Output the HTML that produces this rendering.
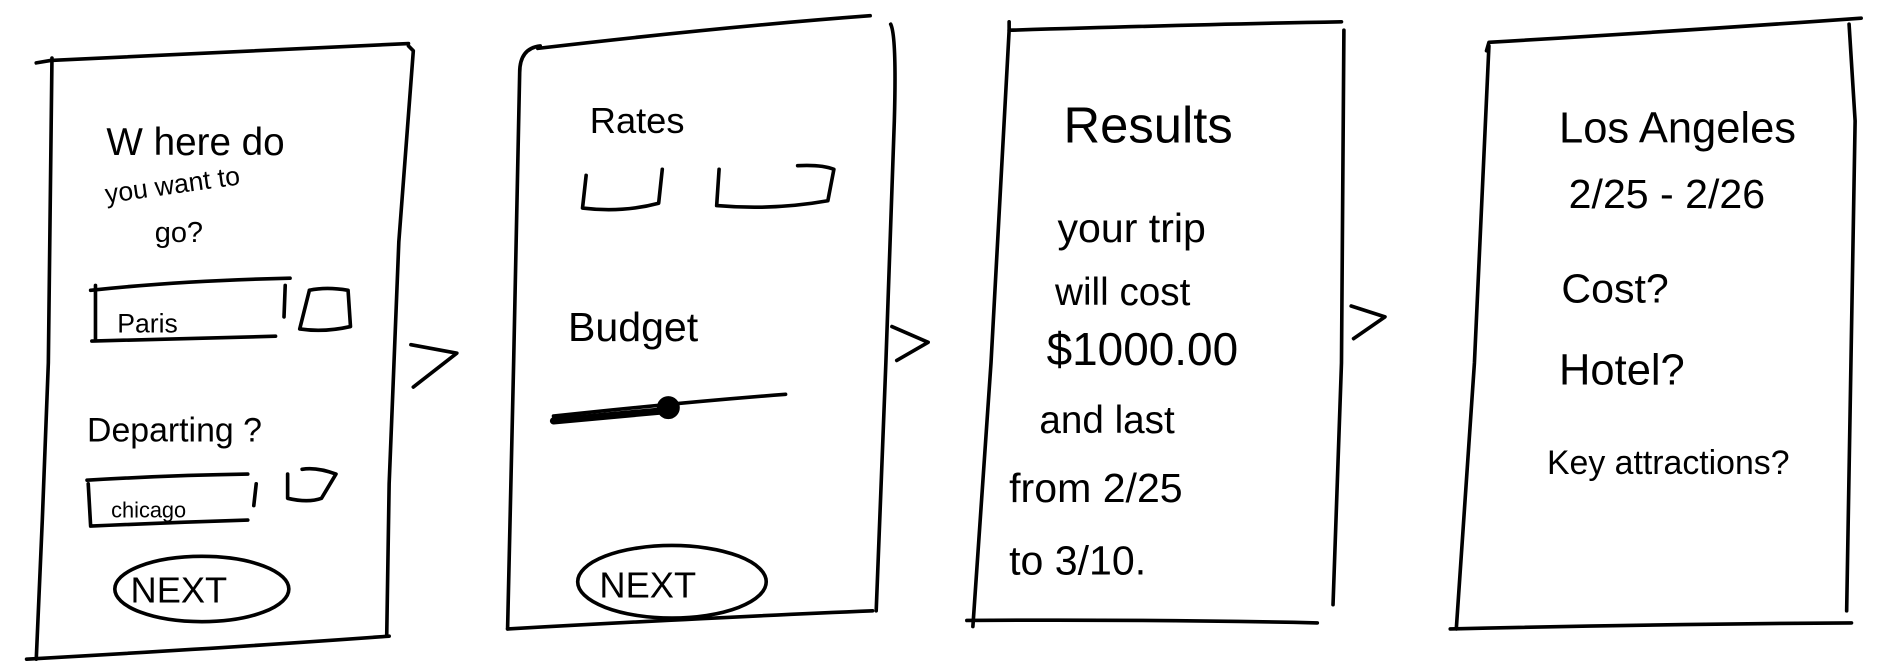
<!DOCTYPE html>
<html><head><meta charset="utf-8"><style>
html,body{margin:0;padding:0;background:#fff;width:1895px;height:664px;overflow:hidden}
svg{display:block}
text{font-family:"Liberation Sans",sans-serif;fill:#000;font-weight:normal}
</style></head><body>
<svg width="1895" height="664" viewBox="0 0 1568 549" preserveAspectRatio="none">
<g fill="none" stroke="#000" stroke-width="3" stroke-linecap="round" stroke-linejoin="round">
<!-- panel 1 -->
<path d="M30 52 L42 50 Q200 42 338 36"/>
<path d="M43 48 L40 300 L35 430 L30 545"/>
<path d="M338 38 L342 42 L330 200 L322 400 L320 525"/>
<path d="M22 545 Q200 535 322 526"/>
<!-- panel 2 -->
<path d="M445 40 Q600 22 720 13"/>
<path d="M447 38 Q430 40 430 60 L425 300 L420 520"/>
<path d="M737 20 Q742 30 740 100 L733 300 L725 505"/>
<path d="M420 520 Q600 510 722 505"/>
<!-- panel 3 -->
<path d="M835 18 L835 25 Q1000 20 1110 18"/>
<path d="M835 25 L820 300 L805 518"/>
<path d="M1112 25 L1110 300 L1103 500"/>
<path d="M800 513 Q950 512 1090 515"/>
<!-- panel 4 -->
<path d="M1230 42 L1232 35 Q1400 25 1540 15"/>
<path d="M1232 38 L1220 300 L1205 520"/>
<path d="M1530 20 L1535 100 L1528 505"/>
<path d="M1200 520 Q1380 516 1532 515"/>
<!-- arrows -->
<path d="M340 285 L378 292 L342 320"/>
<path d="M738 270 L768 283 L742 298"/>
<path d="M1118 253 L1146 262 L1120 280"/>
<!-- panel1 inputs -->
<path d="M75 240 Q150 232 240 230"/><path d="M79 236 L79 280"/><path d="M76 282 Q150 280 228 278"/><path d="M236 236 L235 262"/>
<path d="M256 240 L248 272 Q268 275 290 270 L288 240 Q270 237 256 240"/>
<path d="M72 397 Q140 393 205 392"/><path d="M73 400 L75 435 Q140 432 205 430"/><path d="M212 400 L210 418"/>
<path d="M238 392 L238 412 Q255 416 266 412 L278 392 Q262 386 250 388"/>
<ellipse cx="167" cy="487" rx="72" ry="27"/>
<!-- panel2 -->
<path d="M485 145 L482 172 Q515 176 545 168 L548 140"/>
<path d="M595 140 L593 170 Q640 174 685 166 L690 140 Q680 136 660 137"/>
<path d="M458 344 Q560 333 650 326"/><path d="M458 348 L545 340" stroke-width="6"/>
<circle cx="553" cy="337" r="8" fill="#000"/>
<ellipse cx="556" cy="481" rx="78" ry="30"/>
</g>
<g font-size="28">
<text x="88" y="128" font-size="32">W here do</text>
<text x="88" y="168" font-size="22" transform="rotate(-8 88 168)">you want to</text>
<text x="128" y="200" font-size="24">go?</text>
<text x="97" y="275" font-size="22">Paris</text>
<text x="72" y="365" font-size="28">Departing ?</text>
<text x="92" y="428" font-size="18">chicago</text>
<text x="108" y="498" font-size="30">NEXT</text>
<text x="488" y="110" font-size="30">Rates</text>
<text x="470" y="282" font-size="34">Budget</text>
<text x="496" y="494" font-size="30">NEXT</text>
<text x="880" y="118" font-size="42">Results</text>
<text x="875" y="200" font-size="34">your trip</text>
<text x="873" y="252" font-size="32">will cost</text>
<text x="866" y="302" font-size="38">$1000.00</text>
<text x="860" y="358" font-size="32">and last</text>
<text x="835" y="415" font-size="34">from 2/25</text>
<text x="835" y="475" font-size="34">to 3/10.</text>
<text x="1290" y="118" font-size="36">Los Angeles</text>
<text x="1298" y="172" font-size="34">2/25 - 2/26</text>
<text x="1292" y="250" font-size="34">Cost?</text>
<text x="1290" y="318" font-size="36">Hotel?</text>
<text x="1280" y="392" font-size="28">Key attractions?</text>
</g>
</svg>
</body></html>
